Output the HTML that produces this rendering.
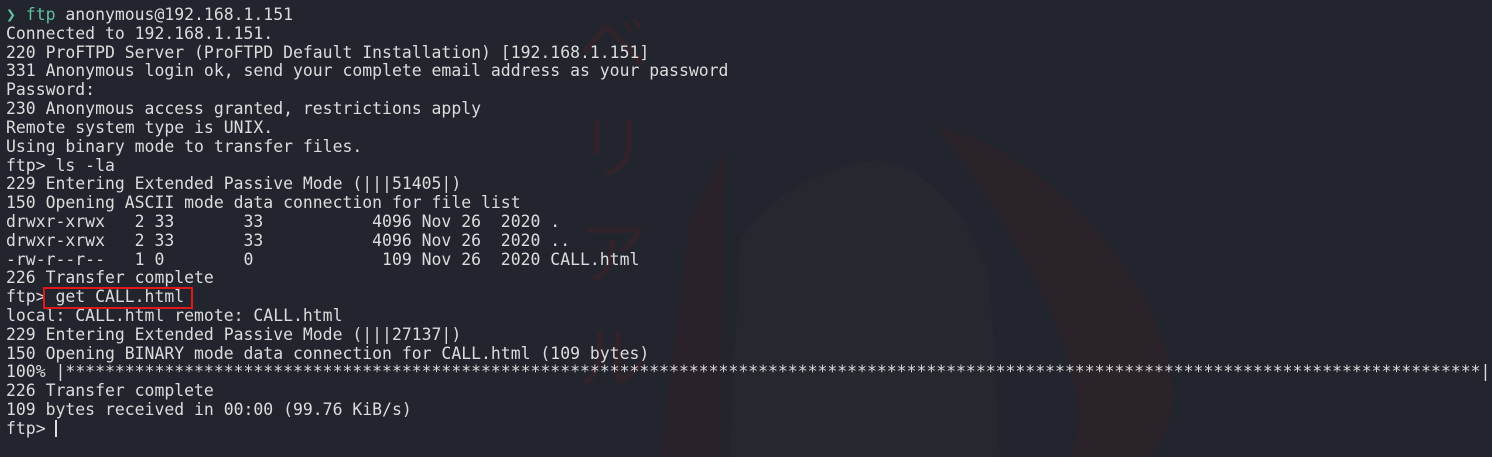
<!DOCTYPE html>
<html><head><meta charset="utf-8"><style>
html,body{margin:0;padding:0;width:1492px;height:457px;overflow:hidden;background:#22252e;}
.bg{position:absolute;left:0;top:0;width:1492px;height:457px;}
pre{position:absolute;left:6px;top:6px;margin:0;font-family:"DejaVu Sans Mono","Liberation Mono",monospace;font-size:16.45px;line-height:18.82px;color:#dcdcdc;white-space:pre;}
.g{color:#5fbf9f;}
.box{position:absolute;left:43px;top:287px;width:150px;height:22px;border:2px solid #e01a1a;box-sizing:border-box;}
.cur{display:inline-block;width:2px;height:17px;background:#dcdcdc;vertical-align:-3px;}
.kata{position:absolute;left:578px;top:-14px;font-family:"Noto Sans CJK JP",sans-serif;font-size:70px;line-height:105px;color:#30232a;width:80px;}
</style></head><body>
<svg class="bg" viewBox="0 0 1492 457">
<path d="M935 125 Q1060 160 1140 290 Q1200 400 1150 457 L1070 457 Q1110 360 935 125Z" fill="#2a232a"/>
<path d="M690 220 L725 150 L720 457 L660 457 Z" fill="#29222a"/>
<path d="M740 240 Q790 170 880 160 Q960 180 990 280 L1000 457 L730 457 Z" fill="#25282f"/>
</svg>
<div class="kata">ベ<br>リ<br>ア<br>ル</div>
<pre><span class="g">❯ ftp</span> anonymous@192.168.1.151
Connected to 192.168.1.151.
220 ProFTPD Server (ProFTPD Default Installation) [192.168.1.151]
331 Anonymous login ok, send your complete email address as your password
Password:
230 Anonymous access granted, restrictions apply
Remote system type is UNIX.
Using binary mode to transfer files.
ftp&gt; ls -la
229 Entering Extended Passive Mode (|||51405|)
150 Opening ASCII mode data connection for file list
drwxr-xrwx   2 33       33           4096 Nov 26  2020 .
drwxr-xrwx   2 33       33           4096 Nov 26  2020 ..
-rw-r--r--   1 0        0             109 Nov 26  2020 CALL.html
226 Transfer complete
ftp&gt; get CALL.html
local: CALL.html remote: CALL.html
229 Entering Extended Passive Mode (|||27137|)
150 Opening BINARY mode data connection for CALL.html (109 bytes)
100% |***********************************************************************************************************************************************|
226 Transfer complete
109 bytes received in 00:00 (99.76 KiB/s)
ftp&gt; <span class="cur"></span></pre>
<div class="box"></div>
</body></html>
